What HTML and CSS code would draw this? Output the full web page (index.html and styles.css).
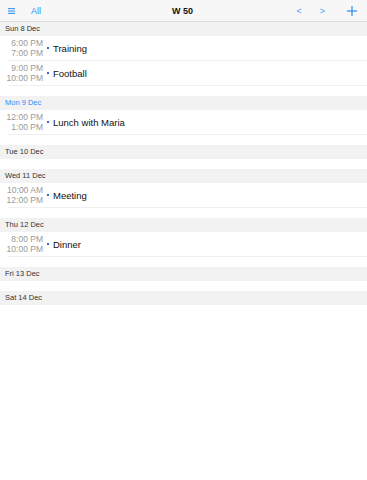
FILE: index.html
```html
<!DOCTYPE html>
<html lang="en">
<head>
    <meta charset="UTF-8">
    <meta name="viewport" content="width=device-width, initial-scale=1.0">
    <title>Week 50</title>
    <link rel="stylesheet" href="styles.css">
</head>
<body>
    <div class="navbar">
        <div class="nav-left">
            <span class="menu-icon">
                <svg width="7" height="6" viewBox="0 0 7 6"><rect x="0" y="0" width="7" height="1.2" fill="#4a9bf5"/><rect x="0" y="2.4" width="7" height="1.2" fill="#4a9bf5"/><rect x="0" y="4.8" width="7" height="1.2" fill="#4a9bf5"/></svg>
            </span>
            <span class="nav-link">All</span>
        </div>
        <div class="nav-title">W 50</div>
        <div class="nav-right">
            <span class="arrow">&lt;</span>
            <span class="arrow">&gt;</span>
            <span class="plus">
                <svg width="10" height="10" viewBox="0 0 10 10"><rect x="4.4" y="0" width="1.2" height="10" fill="#2f8cf4"/><rect x="0" y="4.4" width="10" height="1.2" fill="#2f8cf4"/></svg>
            </span>
        </div>
    </div>

    <div class="day">
        <div class="day-header">Sun 8 Dec</div>
        <div class="event">
            <div class="times"><span>6:00 PM</span><span>7:00 PM</span></div>
            <span class="dot"></span>
            <span class="title">Training</span>
        </div>
        <div class="event">
            <div class="times"><span>9:00 PM</span><span>10:00 PM</span></div>
            <span class="dot"></span>
            <span class="title">Football</span>
        </div>
    </div>

    <div class="day">
        <div class="day-header today">Mon 9 Dec</div>
        <div class="event">
            <div class="times"><span>12:00 PM</span><span>1:00 PM</span></div>
            <span class="dot"></span>
            <span class="title">Lunch with Maria</span>
        </div>
    </div>

    <div class="day">
        <div class="day-header">Tue 10 Dec</div>
    </div>

    <div class="day">
        <div class="day-header">Wed 11 Dec</div>
        <div class="event">
            <div class="times"><span>10:00 AM</span><span>12:00 PM</span></div>
            <span class="dot"></span>
            <span class="title">Meeting</span>
        </div>
    </div>

    <div class="day">
        <div class="day-header">Thu 12 Dec</div>
        <div class="event">
            <div class="times"><span>8:00 PM</span><span>10:00 PM</span></div>
            <span class="dot"></span>
            <span class="title">Dinner</span>
        </div>
    </div>

    <div class="day">
        <div class="day-header">Fri 13 Dec</div>
    </div>

    <div class="day">
        <div class="day-header">Sat 14 Dec</div>
    </div>
</body>
</html>
```

FILE: styles.css
```css
body {
    margin: 0;
    background: #ffffff;
    font-family: "Liberation Sans", Arial, sans-serif;
    color: #111;
}
.navbar {
    height: 21px;
    background: #f7f7f7;
    border-bottom: 1px solid #dcdcdc;
    display: flex;
    align-items: center;
}
.nav-left {
    display: flex;
    align-items: center;
    padding-left: 8px;
    flex: 1;
}
.menu-icon {
    display: flex;
    margin-top: 1px;
}
.nav-link {
    margin-left: 16px;
    font-size: 9px;
    color: #2f8cf4;
}
.nav-title {
    font-size: 9px;
    font-weight: bold;
    color: #111;
}
.nav-right {
    flex: 1;
    display: flex;
    justify-content: flex-end;
    align-items: center;
    padding-right: 10px;
}
.arrow {
    font-size: 9px;
    color: #4a9bf5;
    margin-right: 18px;
}
.arrow + .arrow {
    margin-right: 22px;
}
.plus {
    display: flex;
}
.day {
    margin-bottom: 10px;
}
.day-header {
    height: 14px;
    line-height: 14px;
    background: #f2f2f2;
    padding-left: 5px;
    font-size: 7.5px;
    color: #333;
}
.day-header.today {
    color: #2f8cf4;
}
.event {
    height: 24px;
    display: flex;
    align-items: center;
    margin-left: 8px;
    border-bottom: 1px solid #f0f0f0;
}
.times {
    width: 35px;
    flex: 0 0 35px;
    display: flex;
    flex-direction: column;
    align-items: flex-end;
    white-space: nowrap;
    font-size: 8.5px;
    line-height: 10px;
    color: #999;
}
.dot {
    width: 2px;
    height: 2px;
    background: #3b6bc9;
    margin: 0 4px;
}
.title {
    font-size: 9.5px;
    color: #111;
}
```
